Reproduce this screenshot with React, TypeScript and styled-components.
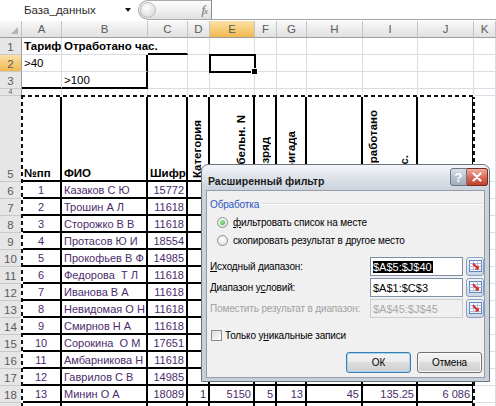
import React from "react";
import styled, { createGlobalStyle } from "styled-components";

const GlobalStyle = createGlobalStyle`
  html, body {
    margin: 0;
    padding: 0;
    background: #fff;
  }
  body {
    font-family: "Liberation Sans", Arial, sans-serif;
    overflow: hidden;
  }
`;

const Screen = styled.div`
  position: relative;
  width: 496px;
  height: 406px;
  overflow: hidden;
  background: #fff;
  display: flex;
  flex-direction: column;
`;

/* ---------- formula bar ---------- */

const FormulaBar = styled.div`
  display: flex;
  flex: none;
  height: 20px;
  margin-bottom: 1px;
`;

const NameBox = styled.div`
  width: 138px;
  box-sizing: border-box;
  display: flex;
  align-items: center;
  justify-content: space-between;
  padding: 0 7px 0 24px;
  font-size: 11.5px;
  color: #2a2a2a;
`;

const DropArrow = styled.span`
  width: 0;
  height: 0;
  border-left: 3px solid transparent;
  border-right: 3px solid transparent;
  border-top: 4px solid #1c1c1c;
`;

const FxPill = styled.div`
  width: 73px;
  box-sizing: border-box;
  border: 1px solid #a8a8a8;
  border-right: none;
  border-radius: 10px 0 0 10px;
  background: linear-gradient(#fdfdfd, #efefef 50%, #e0e0e0);
  display: flex;
  align-items: center;
  justify-content: space-between;
  padding: 0 4px 0 1px;
`;

const Knob = styled.span`
  width: 16px;
  height: 16px;
  box-sizing: border-box;
  border-radius: 50%;
  border: 1px solid #bdbdbd;
  background: radial-gradient(circle at 40% 35%, #ffffff, #e2e2e2 65%, #c4c4c4);
`;

const FxLabel = styled.span`
  font-family: "Liberation Serif", serif;
  font-style: italic;
  font-size: 13px;
  color: #707070;
  letter-spacing: -1px;

  small {
    font-size: 9px;
  }
`;

const FormulaInput = styled.div`
  flex: 1;
  border-left: 1px solid #8f8f8f;
  border-bottom: 1px solid #a2a2a2;
`;

/* ---------- sheet ---------- */

const Sheet = styled.div`
  display: grid;
  grid-template-columns: 22px 40px 86px 40px 22px 45px 22px 30px 56px 55px 56px 1fr;
  grid-template-rows: 17px 17px 17px 17px 7px 86px repeat(14, 17px);
  font-size: 11px;
`;

const headBg = "linear-gradient(#f9f9f9, #ececec 50%, #e1e1e1)";
const activeBg = "linear-gradient(#fbe2a8, #f6cc78 50%, #f1b94f)";

const ColHead = styled.div<{ $active?: boolean }>`
  display: flex;
  align-items: center;
  justify-content: center;
  box-sizing: border-box;
  font-size: 11.5px;
  color: #5b5b5b;
  background: ${(p) => (p.$active ? activeBg : headBg)};
  border-right: 1px solid #c4c4c4;
  border-bottom: 1px solid #9e9e9e;
`;

const Corner = styled(ColHead)`
  align-items: flex-end;
  justify-content: flex-end;
  padding: 0 3px 3px 0;
`;

const CornerTri = styled.span`
  width: 0;
  height: 0;
  border-left: 7px solid transparent;
  border-bottom: 7px solid #b3b3b3;
`;

const RowHead = styled.div<{ $active?: boolean; $tiny?: boolean }>`
  display: flex;
  align-items: flex-end;
  justify-content: center;
  box-sizing: border-box;
  overflow: hidden;
  padding-bottom: ${(p) => (p.$tiny ? "0" : "1px")};
  color: #5b5b5b;
  font-size: ${(p) => (p.$tiny ? "7px" : "11.5px")};
  line-height: ${(p) => (p.$tiny ? "6px" : "normal")};
  background: ${(p) => (p.$active ? activeBg : "#e6e6e6")};
  border-right: 1px solid #9e9e9e;
  border-bottom: 1px solid #c9c9c9;
`;

type Align = "left" | "center" | "right";

const justify = (a?: Align) =>
  a === "center" ? "center" : a === "right" ? "flex-end" : "flex-start";

const grid = "1px solid #dadde2";
const thick = "2px solid #000";

const Cell = styled.div<{
  $align?: Align;
  $bold?: boolean;
  $thickR?: boolean;
  $thickB?: boolean;
  $noR?: boolean;
  $data?: boolean;
  $bottom?: boolean;
}>`
  box-sizing: border-box;
  min-width: 0;
  overflow: ${(p) => (p.$noR ? "visible" : "hidden")};
  display: flex;
  align-items: ${(p) => (p.$bottom ? "flex-end" : "center")};
  justify-content: ${(p) => justify(p.$align)};
  padding: 0 2px ${(p) => (p.$bottom ? "1px" : "0")};
  white-space: pre;
  font-size: ${(p) => (p.$data ? "11px" : "11.5px")};
  font-weight: ${(p) => (p.$bold ? "bold" : "normal")};
  color: ${(p) => (p.$data ? "#4b2c6c" : "#000")};
  border-right: ${(p) => (p.$thickR ? thick : p.$noR ? "1px solid transparent" : grid)};
  border-bottom: ${(p) => (p.$thickB ? thick : grid)};
`;

const VCell = styled(Cell)<{ $pad?: string }>`
  align-items: flex-end;
  padding: ${(p) => p.$pad ?? "0 0 2px"};
`;

const VText = styled.span`
  writing-mode: vertical-rl;
  transform: rotate(180deg);
  font-weight: bold;
  line-height: 13px;
`;

/* ---------- overlays on the sheet ---------- */

const MarchingAnts = styled.div`
  position: absolute;
  left: 21px;
  top: 95px;
  width: 454px;
  height: 330px;
  pointer-events: none;
  background:
    repeating-linear-gradient(90deg, #111 0 4px, #fff 4px 7px) top left / 100% 2px no-repeat,
    repeating-linear-gradient(180deg, #111 0 4px, #fff 4px 7px) top left / 2px 100% no-repeat,
    repeating-linear-gradient(180deg, #111 0 4px, #fff 4px 7px) top right / 2px 100% no-repeat;
`;

const ActiveCell = styled.div`
  position: absolute;
  left: 209px;
  top: 54px;
  width: 47px;
  height: 19px;
  box-sizing: border-box;
  border: 2px solid #000;
  pointer-events: none;
`;

const FillHandle = styled.span`
  position: absolute;
  right: -4px;
  bottom: -4px;
  width: 5px;
  height: 5px;
  background: #000;
  border: 1px solid #fff;
`;

/* ---------- dialog ---------- */

const Dialog = styled.div`
  position: absolute;
  left: 201px;
  top: 164px;
  width: 289px;
  height: 218px;
  box-sizing: border-box;
  border: 1px solid #6d7480;
  border-radius: 7px 7px 0 0;
  background: linear-gradient(180deg, #f3f5f8 0px, #dfe4ea 12px, #cbd3dd 25px, #c8d0da 100%);
  padding: 0 4px 3px 4px;
  display: flex;
  flex-direction: column;
  z-index: 5;
`;

const TitleBar = styled.div`
  height: 25px;
  flex: none;
  display: flex;
  justify-content: space-between;
  padding-left: 2px;
`;

const TitleText = styled.span`
  font-size: 10.5px;
  font-weight: bold;
  color: #1b1b1b;
  padding-top: 10px;
`;

const TitleButtons = styled.div`
  display: flex;
  margin: 3px -3px 0 0;
`;

const HelpButton = styled.div`
  width: 17px;
  height: 18px;
  box-sizing: border-box;
  border: 1px solid #6b7486;
  border-radius: 3px 0 0 3px;
  background: linear-gradient(#dce1e8, #b8c1ce 50%, #a1acbd);
  color: #fff;
  font-weight: bold;
  font-size: 13px;
  display: flex;
  align-items: center;
  justify-content: center;
`;

const CloseButton = styled.div`
  width: 21px;
  height: 18px;
  box-sizing: border-box;
  border: 1px solid #7c2a1f;
  border-left: none;
  border-radius: 0 3px 3px 0;
  background: linear-gradient(#eeae9f, #d96c57 50%, #c3412c);
  display: flex;
  align-items: center;
  justify-content: center;
`;

const Body = styled.div`
  flex: 1;
  background: #f0f0f0;
  border: 1px solid #939ca8;
  display: flex;
  flex-direction: column;
  font-size: 10px;
  letter-spacing: -0.15px;
  color: #000;
`;

const GroupHeader = styled.div`
  display: flex;
  align-items: center;
  gap: 3px;
  height: 14px;
  margin: 6px 2px 0 3px;
  color: #2a55c5;
`;

const GroupLine = styled.span`
  flex: 1;
  height: 1px;
  background: #d4dbe3;
  border-bottom: 1px solid #fff;
`;

const RadioList = styled.div`
  display: flex;
  flex-direction: column;
  margin: 2px 0 0 10px;
`;

const OptionRow = styled.label`
  display: flex;
  align-items: center;
  gap: 5px;
  height: 18px;
`;

const Radio = styled.span<{ $on?: boolean }>`
  width: 11px;
  height: 11px;
  box-sizing: border-box;
  border-radius: 50%;
  border: 1px solid #8c8e90;
  background: radial-gradient(circle at 50% 40%, #ffffff, #e2e2e2 85%);
  display: flex;
  align-items: center;
  justify-content: center;

  &::after {
    content: "";
    width: 5px;
    height: 5px;
    border-radius: 50%;
    background: ${(p) =>
      p.$on ? "radial-gradient(circle at 40% 35%, #a4ee9c, #23a923)" : "transparent"};
  }
`;

const Fields = styled.div`
  display: flex;
  flex-direction: column;
  gap: 2px;
  margin: 8px 0 0 3px;
`;

const FieldRow = styled.div<{ $disabled?: boolean }>`
  display: grid;
  grid-template-columns: 160px 93px 3px 18px;
  align-items: center;
  height: 19px;
  color: ${(p) => (p.$disabled ? "#a2a2a2" : "#000")};
`;

const RangeInput = styled.div<{ $disabled?: boolean }>`
  height: 19px;
  box-sizing: border-box;
  border: 1px solid ${(p) => (p.$disabled ? "#c9ced5" : "#7d90a5")};
  background: ${(p) => (p.$disabled ? "#f0f0f0" : "#fff")};
  color: ${(p) => (p.$disabled ? "#a8a8a8" : "#000")};
  display: flex;
  align-items: center;
  padding-left: 2px;
  font-size: 11px;
  letter-spacing: 0;
`;

const Selected = styled.span`
  background: #000;
  color: #fff;
  padding-right: 1px;
`;

const RangeButton = styled.div`
  grid-column: 4;
  width: 18px;
  height: 19px;
  box-sizing: border-box;
  border: 1px solid #8aa0bb;
  border-radius: 3px;
  background: linear-gradient(#f1f5f9, #dbe4ee 50%, #cbd7e5);
  display: flex;
  align-items: center;
  justify-content: center;
`;

const CheckRow = styled.label`
  display: flex;
  align-items: center;
  gap: 3px;
  height: 16px;
  margin: 9px 0 0 4px;
`;

const CheckBox = styled.span`
  width: 11px;
  height: 11px;
  box-sizing: border-box;
  border: 1px solid #8c8e90;
  background: linear-gradient(135deg, #d9d9d9, #ffffff);
`;

const ButtonRow = styled.div`
  display: flex;
  justify-content: flex-end;
  gap: 6px;
  margin: 9px 2px 0 0;
`;

const PushButton = styled.div<{ $default?: boolean }>`
  width: 65px;
  height: 21px;
  box-sizing: border-box;
  border: 1px solid ${(p) => (p.$default ? "#3d7bad" : "#707070")};
  border-radius: 3px;
  background: linear-gradient(#f3f3f3, #ebebeb 49%, #dddddd 50%, #cfcfcf);
  box-shadow: inset 0 0 0 1px ${(p) => (p.$default ? "#9fd6f5" : "#fbfbfb")};
  display: flex;
  align-items: center;
  justify-content: center;
`;

const U = styled.span`
  text-decoration: underline;
`;

/* ---------- icons ---------- */

const CloseIcon = () => (
  <svg width="10" height="10" viewBox="0 0 10 10">
    <path d="M1.5 1.5 L8.5 8.5 M8.5 1.5 L1.5 8.5" stroke="#fff" strokeWidth="2.2" strokeLinecap="round" />
  </svg>
);

const RangeIcon = () => (
  <svg width="13" height="13" viewBox="0 0 13 13">
    <rect x="0.5" y="0.5" width="12" height="11" fill="#fff" stroke="#5b82bd" />
    <path d="M0.5 3.5 H12.5 M0.5 6.5 H12.5 M0.5 9.5 H12.5 M4.5 0.5 V11.5 M8.5 0.5 V11.5" stroke="#a9c0e2" />
    <path d="M4 3.5 L9 8.5" stroke="#e3261b" strokeWidth="2" />
    <path d="M9.8 5.2 V9.6 H5.6 Z" fill="#e3261b" />
  </svg>
);

/* ---------- data ---------- */

type Spec = {
  t?: string;
  bold?: boolean;
  align?: Align;
  thickR?: boolean;
  thickB?: boolean;
  noR?: boolean;
  data?: boolean;
  bottom?: boolean;
  v?: { texts: string[]; justify: string; pad: string };
};

const LETTERS = ["A", "B", "C", "D", "E", "F", "G", "H", "I", "J", "K"];

const people: [string, string][] = [
  ["Казаков С Ю", "15772"],
  ["Трошин А Л", "11618"],
  ["Сторожко В В", "11618"],
  ["Протасов Ю И", "18554"],
  ["Прокофьев В Ф", "14985"],
  ["Федорова  Т Л", "11618"],
  ["Иванова В А", "11618"],
  ["Невидомая О Н", "11618"],
  ["Смирнов Н А", "11618"],
  ["Сорокина  О М", "17651"],
  ["Амбарникова Н", "11618"],
  ["Гаврилов С В", "14985"],
  ["Минин О А", "18089"],
];

const empty = (n: number): Spec[] => Array.from({ length: n }, () => ({}));
const boxed = (s: Spec = {}): Spec => ({ thickR: true, thickB: true, data: true, ...s });

const headerRow: Spec[] = [
  { t: "№пп", bold: true, bottom: true, thickR: true, thickB: true },
  { t: "ФИО", bold: true, bottom: true, thickR: true, thickB: true },
  { t: "Шифр", bold: true, bottom: true, thickR: true, thickB: true },
  { thickR: true, thickB: true, v: { texts: ["Категория"], justify: "center", pad: "0 1px 2px 0" } },
  { thickR: true, thickB: true, v: { texts: ["Табельн. N"], justify: "flex-end", pad: "0 5px 2px 0" } },
  { thickR: true, thickB: true, v: { texts: ["Разряд"], justify: "center", pad: "0 0 2px" } },
  { thickR: true, thickB: true, v: { texts: ["Бригада"], justify: "center", pad: "0 0 2px" } },
  { thickR: true, thickB: true },
  { thickR: true, thickB: true, v: { texts: ["Отработано", "час."], justify: "space-between", pad: "0 5px 2px 4px" } },
  { thickR: true, thickB: true },
  {},
];

const tail18 = ["1", "5150", "5", "13", "45", "135.25", "6 086"];

const ROWS: Spec[][] = [
  [
    { t: "Тариф", bold: true },
    { t: "Отработано час.", bold: true, noR: true },
    { thickB: true },
    ...empty(8),
  ],
  [{ t: ">40" }, { thickR: true }, ...empty(9)],
  [{ thickB: true }, { t: ">100", thickB: true, thickR: true }, ...empty(9)],
  empty(11),
  headerRow,
  ...people.map(([name, code], i) => [
    boxed({ t: String(i + 1), align: "center" }),
    boxed({ t: name }),
    boxed({ t: code, align: "right" }),
    ...(i === 12
      ? tail18.map((t) => boxed({ t, align: "right" }))
      : Array.from({ length: 7 }, () => boxed())),
    {},
  ]),
  [...Array.from({ length: 10 }, () => boxed()), {}],
];

const renderCell = (c: Spec, key: number) =>
  c.v ? (
    <VCell
      key={key}
      $thickR={c.thickR}
      $thickB={c.thickB}
      $pad={c.v.pad}
      style={{ justifyContent: c.v.justify }}
    >
      {c.v.texts.map((t) => (
        <VText key={t}>{t}</VText>
      ))}
    </VCell>
  ) : (
    <Cell
      key={key}
      $align={c.align}
      $bold={c.bold}
      $thickR={c.thickR}
      $thickB={c.thickB}
      $noR={c.noR}
      $data={c.data}
      $bottom={c.bottom}
    >
      {c.t}
    </Cell>
  );

export default function App(): JSX.Element {
  return (
    <>
      <GlobalStyle />
      <Screen>
        <FormulaBar>
          <NameBox>
            База_данных
            <DropArrow />
          </NameBox>
          <FxPill>
            <Knob />
            <FxLabel>
              f<small>x</small>
            </FxLabel>
          </FxPill>
          <FormulaInput />
        </FormulaBar>

        <Sheet>
          <Corner>
            <CornerTri />
          </Corner>
          {LETTERS.map((l) => (
            <ColHead key={l} $active={l === "E"}>
              {l}
            </ColHead>
          ))}
          {ROWS.map((row, ri) => (
            <React.Fragment key={ri}>
              <RowHead $active={ri === 1} $tiny={ri === 3}>
                {ri < 18 ? ri + 1 : ""}
              </RowHead>
              {row.map((c, ci) => renderCell(c, ci))}
            </React.Fragment>
          ))}
        </Sheet>

        <MarchingAnts />
        <ActiveCell>
          <FillHandle />
        </ActiveCell>

        <Dialog>
          <TitleBar>
            <TitleText>Расширенный фильтр</TitleText>
            <TitleButtons>
              <HelpButton>?</HelpButton>
              <CloseButton>
                <CloseIcon />
              </CloseButton>
            </TitleButtons>
          </TitleBar>
          <Body>
            <GroupHeader>
              Обработка
              <GroupLine />
            </GroupHeader>
            <RadioList>
              <OptionRow>
                <Radio $on />
                <span>
                  <U>ф</U>ильтровать список на месте
                </span>
              </OptionRow>
              <OptionRow>
                <Radio />
                <span>
                  скопировать результат в <U>д</U>ругое место
                </span>
              </OptionRow>
            </RadioList>
            <Fields>
              <FieldRow>
                <span>
                  <U>И</U>сходный диапазон:
                </span>
                <RangeInput>
                  <Selected>$A$5:$J$40</Selected>
                </RangeInput>
                <RangeButton>
                  <RangeIcon />
                </RangeButton>
              </FieldRow>
              <FieldRow>
                <span>
                  Диапазон у<U>с</U>ловий:
                </span>
                <RangeInput>$A$1:$C$3</RangeInput>
                <RangeButton>
                  <RangeIcon />
                </RangeButton>
              </FieldRow>
              <FieldRow $disabled>
                <span>Поместить результат в диапазон:</span>
                <RangeInput $disabled>$A$45:$J$45</RangeInput>
                <RangeButton>
                  <RangeIcon />
                </RangeButton>
              </FieldRow>
            </Fields>
            <CheckRow>
              <CheckBox />
              <span>
                Только у<U>н</U>икальные записи
              </span>
            </CheckRow>
            <ButtonRow>
              <PushButton $default>ОК</PushButton>
              <PushButton>Отмена</PushButton>
            </ButtonRow>
          </Body>
        </Dialog>
      </Screen>
    </>
  );
}
